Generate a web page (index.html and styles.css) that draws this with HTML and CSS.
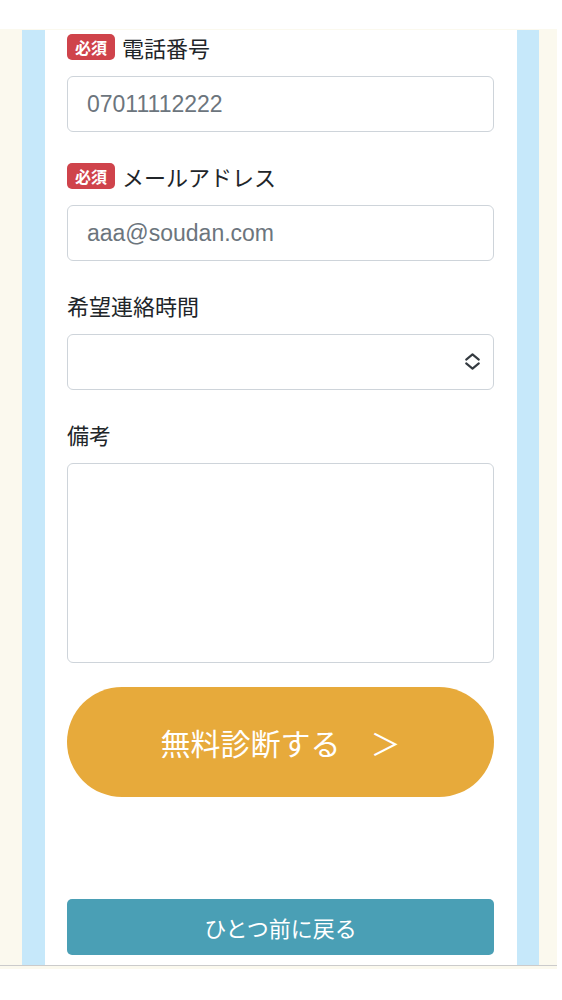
FILE: index.html
```html
<!DOCTYPE html>
<html lang="ja">
<head>
<meta charset="utf-8">
<title>無料診断</title>
<link rel="stylesheet" href="styles.css">
</head>
<body>
<div class="frame">
  <div class="frame-inner">
    <div class="stripe">
      <form class="card">
        <div class="field">
          <label class="label"><span class="badge">必須</span><span>電話番号</span></label>
          <input class="control" type="tel" placeholder="07011112222">
        </div>
        <div class="field">
          <label class="label"><span class="badge">必須</span><span>メールアドレス</span></label>
          <input class="control" type="email" placeholder="aaa@soudan.com">
        </div>
        <div class="field">
          <label class="label"><span>希望連絡時間</span></label>
          <div class="select-wrap">
            <select class="control select"><option></option></select>
            <svg class="chevron" width="17" height="17" viewBox="0 0 17 17" aria-hidden="true">
              <path d="M2.2 6.6 L8.5 1.4 L14.8 6.6" fill="none" stroke="#343a40" stroke-width="2.1" stroke-linecap="round" stroke-linejoin="round"/>
              <path d="M2.2 10.4 L8.5 15.6 L14.8 10.4" fill="none" stroke="#343a40" stroke-width="2.1" stroke-linecap="round" stroke-linejoin="round"/>
            </svg>
          </div>
        </div>
        <div class="field">
          <label class="label"><span>備考</span></label>
          <textarea class="control textarea"></textarea>
        </div>
        <button type="button" class="submit">無料診断する　＞</button>
        <button type="button" class="back">ひとつ前に戻る</button>
      </form>
    </div>
  </div>
</div>
</body>
</html>
```
FILE: styles.css
```css
* { box-sizing: border-box; }
html, body { margin: 0; padding: 0; background: #ffffff; }
body {
  font-family: "Liberation Sans", "Noto Sans CJK JP", sans-serif;
  color: #212529;
}
.frame {
  width: 557px;
  margin-top: 29px;
  background: #fbf9ee;
  padding-bottom: 3px;
}
.frame-inner {
  padding: 1px 18px 0 22px;
  border-bottom: 1px solid #cbcbcb;
}
.stripe {
  background: #c6e8fa;
  padding: 0 22px 0 23px;
}
.card {
  background: #ffffff;
  padding: 2px 23px 10px 22px;
  margin: 0;
  display: flex;
  flex-direction: column;
}
.field {
  display: flex;
  flex-direction: column;
  margin-bottom: 29px;
}
.field:last-of-type { margin-bottom: 24px; }
.label {
  display: flex;
  align-items: center;
  gap: 7px;
  height: 30px;
  margin-bottom: 14px;
  font-family: "Noto Sans CJK JP", sans-serif;
  font-size: 22px;
  line-height: 30px;
  color: #212529;
}
.badge {
  display: inline-block;
  height: 26px;
  line-height: 26px;
  padding: 0 8px;
  border-radius: 5px;
  background: #cf434b;
  color: #ffffff;
  font-size: 16px;
  font-weight: 700;
}
.control {
  display: block;
  width: 100%;
  height: 56px;
  margin: 0;
  padding: 0 19px;
  border: 1px solid #ced4da;
  border-radius: 6px;
  background: #ffffff;
  font-family: "Liberation Sans", "Noto Sans CJK JP", sans-serif;
  font-size: 23px;
  color: #212529;
  outline: none;
}
.control::placeholder { color: #6c757d; opacity: 1; }
.select-wrap { position: relative; }
.select {
  -webkit-appearance: none;
  appearance: none;
}
.chevron {
  position: absolute;
  right: 13px;
  top: 19px;
  pointer-events: none;
}
.textarea {
  height: 200px;
  resize: none;
  padding: 12px 19px;
}
.submit {
  display: block;
  width: 100%;
  height: 110px;
  margin: 0;
  border: none;
  border-radius: 55px;
  background: #e7aa3b;
  color: #ffffff;
  font-family: "Noto Sans CJK JP", sans-serif;
  font-size: 30px;
  font-weight: 400;
  text-align: center;
  cursor: pointer;
}
.back {
  display: block;
  width: 100%;
  height: 56px;
  margin: 102px 0 0;
  border: none;
  border-radius: 5px;
  background: #4a9fb5;
  color: #ffffff;
  font-family: "Noto Sans CJK JP", sans-serif;
  font-size: 22px;
  text-align: center;
  cursor: pointer;
}
```
